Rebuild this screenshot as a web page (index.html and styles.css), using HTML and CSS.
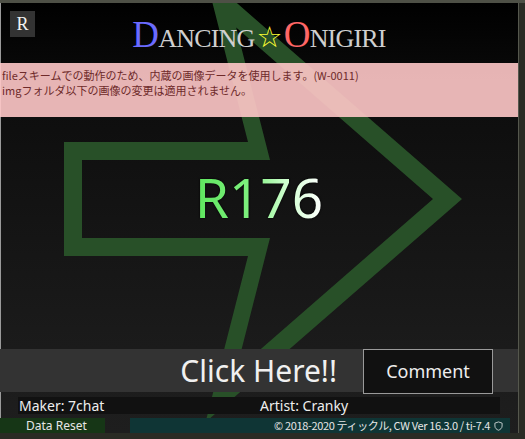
FILE: index.html
```html
<!DOCTYPE html>
<html lang="ja">
<head>
<meta charset="utf-8">
<title>Dancing☆Onigiri</title>
<link rel="stylesheet" href="styles.css">
</head>
<body>
<div class="screen">
  <svg class="arrow" viewBox="0 3 518 430" width="518" height="430" aria-hidden="true">
    <path fill="#285028" fill-rule="evenodd" d="M64 142 L248 142 L205.5 -24.3 L462 199 L205.5 422.3 L248 256 L64 256 Z M82 160 L270 160 L236.2 27.6 L433 199 L236.2 370.4 L270 238 L82 238 Z"/>
  </svg>
  <header class="header">
    <div class="reset-btn">R</div>
    <h1 class="title"><span class="cap-d">D</span><span class="sc">ancing</span><span class="star">☆</span><span class="cap-o">O</span><span class="sc">nigiri</span></h1>
    <div></div>
  </header>
  <div class="warning">
    <p>fileスキームでの動作のため、内蔵の画像データを使用します。(W-0011)</p>
    <p>imgフォルダ以下の画像の変更は適用されません。</p>
  </div>
  <div class="middle">
    <div class="version">R176</div>
  </div>
  <div class="click-band">
    <div class="click-here">Click Here!!</div>
    <div class="comment-btn">Comment</div>
  </div>
  <div class="credits">
    <div>Maker: 7chat</div>
    <div>Artist: Cranky</div>
  </div>
  <div class="bottom">
    <div class="data-reset">Data Reset</div>
    <div class="copyright"><span>© 2018-2020 ティックル, CW Ver 16.3.0 / ti-7.4</span>
      <svg class="shield" viewBox="0 0 10 11" width="9" height="10"><path d="M5 1 L9 2.3 V5.5 C9 8 7 9.4 5 10.2 C3 9.4 1 8 1 5.5 V2.3 Z" fill="none" stroke="#cfd6d6" stroke-width="1"/></svg>
    </div>
  </div>
</div>
</body>
</html>
```

FILE: styles.css
```css
html, body {
  margin: 0;
  padding: 0;
}
body {
  width: 525px;
  height: 439px;
  background: linear-gradient(to bottom, #4e5046 0, #4e5046 3px, #2a2b24 3px);
  overflow: hidden;
  font-family: "Noto Sans", sans-serif;
}
.screen {
  position: relative;
  margin-top: 3px;
  width: 518px;
  height: 430px;
  background: linear-gradient(to bottom, #000 0%, #0e0e0e 25%, #1b1b1b 80%, #1e1e1e 100%);
  box-shadow: inset 1px 0 0 #9a9a9a, 1px 0 0 #55574d;
  display: flex;
  flex-direction: column;
  overflow: hidden;
}
.arrow {
  position: absolute;
  left: 0;
  top: 0;
}
.header, .warning, .middle, .click-band, .credits, .bottom {
  position: relative;
}
.header {
  height: 60px;
  display: grid;
  grid-template-columns: 1fr auto 1fr;
  align-items: start;
}
.reset-btn {
  margin: 8px 0 0 10px;
  width: 25px;
  height: 26px;
  background: #333;
  color: #f2f2f2;
  font-family: "Liberation Serif", serif;
  font-size: 18px;
  line-height: 26px;
  text-align: center;
}
.title {
  margin: 11px 0 0;
  font-family: "Liberation Serif", serif;
  font-weight: normal;
  font-size: 37px;
  line-height: 42px;
  color: #cfcfcf;
  white-space: nowrap;
  letter-spacing: -0.8px;
}
.sc {
  font-variant: small-caps;
}
.cap-d { color: #6b6bff; }
.cap-o { color: #ff6666; }
.star {
  color: #ffff33;
  font-family: "DejaVu Sans", sans-serif;
  font-size: 29px;
  margin: 0 2px;
}
.warning {
  height: 54px;
  box-sizing: border-box;
  padding: 5px 2px 0;
  background: rgba(255, 200, 200, 0.9);
  color: #6e2a2a;
  font-family: "Noto Sans CJK JP", sans-serif;
  font-size: 11px;
  line-height: 15px;
}
.warning p {
  margin: 0;
}
.middle {
  height: 232px;
  box-sizing: border-box;
  padding-top: 53px;
  display: flex;
  justify-content: center;
}
.version {
  font-family: "Noto Sans", sans-serif;
  font-size: 55px;
  line-height: 54px;
  height: 54px;
  background: linear-gradient(to right, #5ee65e 0%, #7ff07f 45%, #ccffcc 70%, #ffffff 100%);
  -webkit-background-clip: text;
  background-clip: text;
  color: transparent;
  filter: drop-shadow(0 0 1px #000);
}
.click-band {
  height: 43px;
  background: #333333;
  display: flex;
  justify-content: flex-end;
  align-items: flex-start;
  gap: 26px;
  padding-right: 25px;
}
.click-here {
  color: #f0f0f0;
  font-size: 30px;
  line-height: 43px;
}
.comment-btn {
  width: 130px;
  height: 45px;
  box-sizing: border-box;
  border: 1px solid #9a9a9a;
  background: #111;
  color: #eee;
  font-size: 18px;
  line-height: 43px;
  text-align: center;
}
.credits {
  margin: 5px 0 0 18px;
  width: 482px;
  height: 17px;
  background: #111;
  display: grid;
  grid-template-columns: 1fr 1fr;
  color: #eee;
  font-size: 14px;
  line-height: 17px;
}
.credits div {
  padding-left: 1px;
}
.bottom {
  margin-top: 4px;
  height: 15px;
  display: flex;
  gap: 25px;
}
.data-reset {
  width: 105px;
  background: #163616;
  color: #e6e6e6;
  font-size: 12px;
  line-height: 15px;
  padding-left: 26px;
  box-sizing: border-box;
}
.copyright {
  width: 380px;
  background: #0f3535;
  color: #e6e6e6;
  font-family: "Noto Sans CJK JP", sans-serif;
  font-size: 11px;
  line-height: 15px;
  letter-spacing: -0.35px;
  padding-right: 7px;
  box-sizing: border-box;
  display: flex;
  justify-content: flex-end;
  align-items: center;
  gap: 4px;
}
.shield {
  display: block;
}
```
